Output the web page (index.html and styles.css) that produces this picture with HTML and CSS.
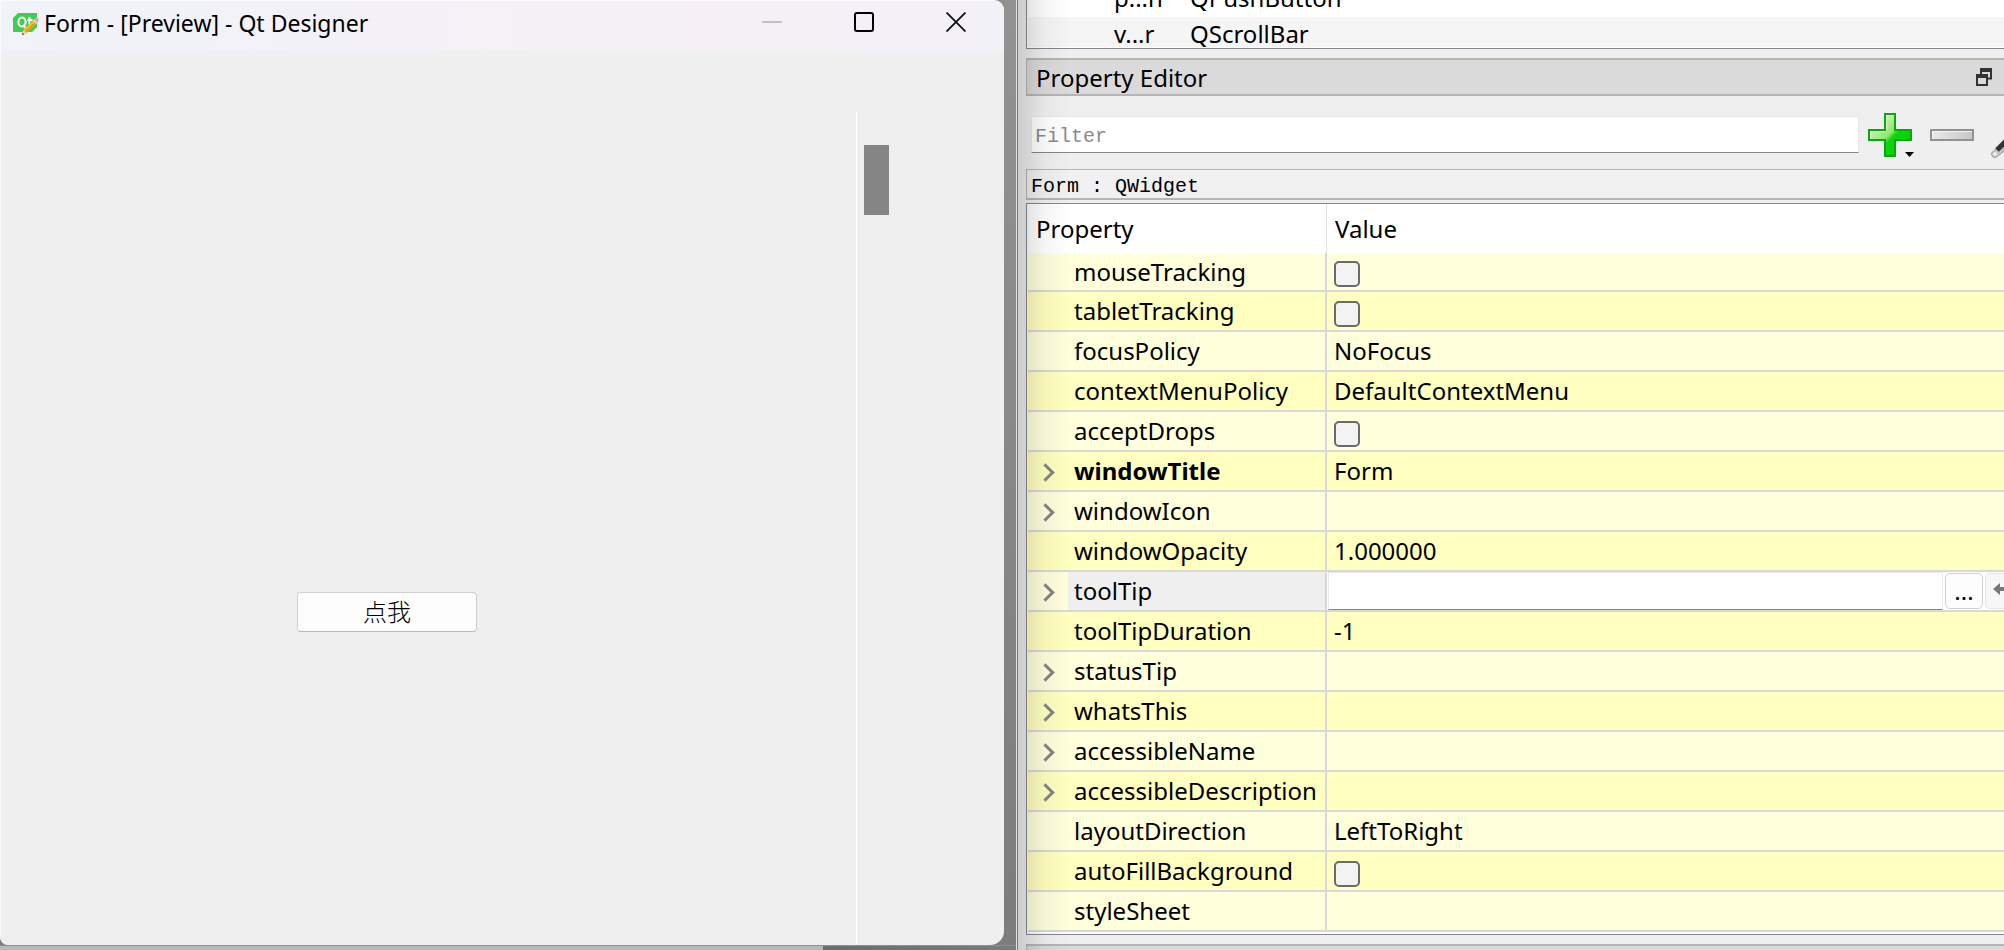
FILE: index.html
```html
<!DOCTYPE html>
<html lang="en">
<head>
<meta charset="utf-8">
<title>Form - [Preview] - Qt Designer</title>
<link rel="stylesheet" href="styles.css">
</head>
<body>
<div class="screen">
  <div class="backdrop">
    <section class="window">
      <header class="titlebar">
        <svg class="app-icon" width="28" height="24" viewBox="0 0 28 24" aria-hidden="true">
          <path d="M6 1h19v14l-5 5H1V6z" fill="#41cd52"/>
          <ellipse cx="10" cy="10" rx="3.6" ry="4.6" fill="none" stroke="#fff" stroke-width="2"/>
          <path d="M11 13l2.500 3M17.500 5v8q0 2 2.500 1.500M15.500 8h5" fill="none" stroke="#fff" stroke-width="2"/>
          <path d="M10 23l1.500-5L22 7.500l3.500 3L14.500 21z" fill="#f8c022" stroke="#c8963a" stroke-width=".5"/>
          <path d="M13.500 20L24.500 9.500" stroke="#e88b12" stroke-width="1.200"/>
          <path d="M10 23l1.500-5 3 3z" fill="#ecd9bd"/><path d="M10 23l.7-2.300 1.600 1.500z" fill="#444"/>
          <path d="M21.500 8L23.500 6q1.500-.8 2.700.3t.3 2.700L24.500 11z" fill="#e6a9a0"/>
          <path d="M20.500 9l1.500-1.500 3.300 3L23.800 12z" fill="#d5d5d5"/>
        </svg>
        <h1 class="window-title">Form - [Preview] - Qt Designer</h1>
        <div class="window-buttons">
          <button class="window-button" aria-label="Minimize"><svg width="20" height="20"><path d="M0 10h20" stroke="#c3c0c7" stroke-width="2"/></svg></button>
          <button class="window-button" aria-label="Maximize"><svg width="20" height="20"><rect x="1" y="1" width="18" height="18" rx="2" fill="none" stroke="#000" stroke-width="2"/></svg></button>
          <button class="window-button" aria-label="Close"><svg width="20" height="20"><path d="M.5.5l19 19M19.500.5l-19 19" stroke="#111" stroke-width="1.800"/></svg></button>
        </div>
      </header>
      <div class="form">
        <div class="form-canvas"><button class="push-button" lang="zh">点我</button></div>
        <div class="scrollbar"><div class="scrollbar-thumb"></div></div>
      </div>
    </section>
    <div class="taskstrip"></div>
  </div>

  <main class="dock">
    <div class="inspector">
      <div class="inspector-rows">
        <div class="inspector-row"><span class="object-name">p...n</span><span>QPushButton</span></div>
        <div class="inspector-row inspector-row-alt"><span class="object-name">v...r</span><span>QScrollBar</span></div>
      </div>
    </div>
    <header class="dock-title">
      <h2 class="dock-name">Property Editor</h2>
      <button class="float-button" aria-label="Float"><svg width="16" height="18"><path d="M5 6V1.500h10v9h-3" fill="none" stroke="#333" stroke-width="2"/><path d="M4 2h12" stroke="#333" stroke-width="4"/><rect x="1" y="8" width="10" height="9" fill="#dadada" stroke="#333" stroke-width="2"/><path d="M0 8h12" stroke="#333" stroke-width="4"/></svg></button>
    </header>
    <div class="toolbar">
      <input class="filter" type="text" placeholder="Filter" aria-label="Filter">
      <button class="tool-button" aria-label="Add property">
        <svg width="48" height="46" viewBox="0 0 48 46">
          <defs><linearGradient id="plus" x1="0" y1="0" x2="1" y2="1"><stop offset="0" stop-color="#f4fdea"/><stop offset=".48" stop-color="#8fe870"/><stop offset=".56" stop-color="#0cd60c"/><stop offset="1" stop-color="#00d000"/></linearGradient></defs>
          <path d="M17 1h10v16h16v10H27v16H17V27H1V17h16z" fill="url(#plus)" stroke="#06a80c" stroke-width="2"/>
          <path d="M18.500 17V2.500h7M2.500 26v-7.500H17" fill="none" stroke="#d8f8c8" stroke-width="1"/>
          <path d="M37 39h9l-4.500 5z" fill="#000"/>
        </svg>
      </button>
      <button class="tool-button" aria-label="Remove property">
        <svg width="44" height="46" viewBox="0 0 44 46">
          <defs><linearGradient id="minus"><stop offset="0" stop-color="#e9e9e9"/><stop offset=".6" stop-color="#d5d5d5"/><stop offset="1" stop-color="#c5c5c5"/></linearGradient></defs>
          <rect x="1" y="17" width="42" height="10" fill="url(#minus)" stroke="#929292" stroke-width="2"/>
          <path d="M2.500 26v-7.500H42" fill="none" stroke="#f4f4f4"/>
        </svg>
      </button>
      <button class="tool-button tool-button-cut" aria-label="Configure">
        <svg width="14" height="46" viewBox="0 0 14 46">
          <path d="M1.500 40L14 28v10l-6 5q-6 4-6.500-3z" fill="#c4c4c4" stroke="#999"/>
          <path d="M7 37L16 28" stroke="#333" stroke-width="5"/>
          <circle cx="5" cy="41" r="2" fill="#eee"/>
        </svg>
      </button>
    </div>
    <div class="object-label">Form : QWidget</div>
    <div class="property-frame">
      <table class="properties">
        <colgroup><col class="col-name"><col></colgroup>
        <thead><tr><th>Property</th><th>Value</th></tr></thead>
        <tbody>
          <tr><td><label class="name" for="mouse">mouseTracking</label></td><td><input class="check" type="checkbox" id="mouse"></td></tr>
          <tr><td><label class="name" for="tablet">tabletTracking</label></td><td><input class="check" type="checkbox" id="tablet"></td></tr>
          <tr><td><span class="name">focusPolicy</span></td><td>NoFocus</td></tr>
          <tr><td><span class="name">contextMenuPolicy</span></td><td>DefaultContextMenu</td></tr>
          <tr><td><label class="name" for="drops">acceptDrops</label></td><td><input class="check" type="checkbox" id="drops"></td></tr>
          <tr><td><span class="name expandable changed">windowTitle</span></td><td>Form</td></tr>
          <tr><td><span class="name expandable">windowIcon</span></td><td></td></tr>
          <tr><td><span class="name">windowOpacity</span></td><td>1.000000</td></tr>
          <tr><td><label class="name expandable selected" for="tooltip">toolTip</label></td>
            <td class="editing"><div class="editor"><input class="editor-input" type="text" id="tooltip"><button class="editor-button" aria-label="Edit text">...</button><button class="editor-button editor-reset" aria-label="Reset"><svg width="20" height="20" viewBox="0 0 20 20"><path d="M0 8l7-6v4h8v4H7v4z" fill="#777"/><path d="M11 13h3v3h-3z" fill="#777"/></svg></button></div></td></tr>
          <tr><td><span class="name">toolTipDuration</span></td><td>-1</td></tr>
          <tr><td><span class="name expandable">statusTip</span></td><td></td></tr>
          <tr><td><span class="name expandable">whatsThis</span></td><td></td></tr>
          <tr><td><span class="name expandable">accessibleName</span></td><td></td></tr>
          <tr><td><span class="name expandable">accessibleDescription</span></td><td></td></tr>
          <tr><td><span class="name">layoutDirection</span></td><td>LeftToRight</td></tr>
          <tr><td><label class="name" for="autofill">autoFillBackground</label></td><td><input class="check" type="checkbox" id="autofill"></td></tr>
          <tr><td><span class="name">styleSheet</span></td><td></td></tr>
        </tbody>
      </table>
    </div>
    <div class="next-dock"></div>
  </main>
</div>
</body>
</html>
```
FILE: styles.css
```css
* { box-sizing: border-box; }

body {
  margin: 0;
  overflow: hidden;
  color: #000;
  font: 24px/36px "Noto Sans", "Open Sans", sans-serif;
}

button { margin: 0; padding: 0; border: 0; background: none; color: inherit; font: inherit; }
svg { display: block; }

.screen {
  display: grid;
  grid-template-columns: 1016fr 988fr;
  height: 100vh;
  overflow: hidden;
  background: #efefef;
}

/* Preview window */
.backdrop {
  display: flex;
  flex-direction: column;
  min-width: 0;
  padding-right: 12px;
  background: linear-gradient(#929292, #7c7c7c);
}

.window {
  display: flex;
  flex: 1;
  flex-direction: column;
  overflow: hidden;
  border-top: 1px solid #fafafc;
  border-left: 1px solid #fafafc;
  border-radius: 0 10px 14px 8px;
  background: #efefef;
}

.titlebar {
  display: flex;
  align-items: center;
  height: 50px;
  padding: 0 16px 6px 11px;
  background: linear-gradient(90deg, #f0f3f9, #f6f0f6 70%, #f3f1f8);
}

.app-icon { margin-top: 2px; }
.window-title { flex: 1; margin: 0 0 0 4px; font-size: 23px; font-weight: 400; }
.window-buttons { display: flex; margin-top: -2px; }
.window-button { display: grid; place-items: center; width: 92px; height: 44px; }
.window-button:last-child { width: 64px; margin-left: 14px; }

.form { display: flex; flex: 1; padding-top: 60px; }

.form-canvas {
  display: grid;
  flex: 1;
  grid-template-rows: 481px 40px;
  grid-template-columns: 296fr 180px 379fr;
}

.push-button {
  grid-area: 2 / 2;
  padding-bottom: 2px;
  border: 1px solid #d0d0d0;
  border-bottom-color: #b8b8b8;
  border-radius: 4px;
  background: #fdfdfd;
  font-family: "Noto Sans CJK SC", sans-serif;
  font-weight: 300;
}

.scrollbar { width: 148px; padding: 34px 0 0 7px; border-left: 1px solid #fff; }
.scrollbar-thumb { width: 25px; height: 70px; background: #858585; }

.taskstrip {
  height: 5px;
  margin-right: -12px;
  border-top: 1px solid #8e8e8e;
  background: linear-gradient(90deg, #b9b9b9 81%, #6c6c6c 81%, #7c7c7c);
}

/* Designer docks */
.dock {
  position: relative;
  display: flex;
  flex-direction: column;
  min-width: 0;
  padding-left: 9px;
  border-left: 1px solid #e2e2ea;
  box-shadow: inset 1px 0 #777780;
}

/* Shadow cast by the preview window */
.dock::after {
  content: "";
  position: absolute;
  inset: 0 auto 0 1px;
  width: 52px;
  background: linear-gradient(90deg, rgba(0, 0, 0, .15), rgba(0, 0, 0, .04) 50%, transparent);
  pointer-events: none;
}

.inspector {
  height: 49px;
  overflow: hidden;
  padding-bottom: 1px;
  border: solid #828790;
  border-width: 0 0 1px 1px;
  background: #fff;
}

.inspector-rows { height: 47px; margin-left: 1px; overflow: hidden; }
.inspector-row { display: flex; height: 36px; padding-left: 86px; line-height: 34px; }
.inspector-row:first-child { margin-top: -19px; }
.inspector-row-alt { background: #f5f5f5; }
.object-name { width: 76px; }

.dock-title {
  display: flex;
  align-items: center;
  justify-content: space-between;
  height: 38px;
  margin-top: 9px;
  padding: 0 12px 0 9px;
  border: solid #b5b5b5;
  border-width: 2px 0 2px 1px;
  background: #dadada;
}

.dock-name { margin: 0; padding-top: 2px; font-size: 24px; font-weight: 400; }

.toolbar { display: flex; padding: 17px 0 10px 5px; }

.filter {
  flex: 1;
  min-width: 0;
  height: 37px;
  margin-top: 3px;
  padding: 4px 3px 0;
  border: 1px solid #e8e8e8;
  border-bottom-color: #868686;
  background: #fff;
  font: 20px/24px "Liberation Mono", monospace;
}

.filter::placeholder { color: #8a8a8a; }
.tool-button { margin-left: 9px; }
.tool-button + .tool-button { margin-left: 14px; }
.tool-button + .tool-button-cut { margin-left: 16px; }

.object-label {
  height: 31px;
  padding-left: 4px;
  border: solid #b5b5b5;
  border-width: 1px 0 2px 1px;
  background: #f1f1f1;
  font: 20px/34px "Liberation Mono", monospace;
}

.property-frame {
  margin-top: 3px;
  padding: 0 0 2px 1px;
  border: solid #828790;
  border-width: 1px 0 1px 1px;
  background: #fff;
}

.properties { width: 100%; table-layout: fixed; border-spacing: 0; }
.col-name { width: 299px; }

.properties th {
  height: 49px;
  padding: 0 8px;
  font-weight: 400;
  text-align: left;
}

.properties th:first-child { border-right: 1px solid #e2e2e2; }

.properties td {
  height: 40px;
  padding: 0 0 0 7px;
  border-bottom: 2px solid #d8d8d8;
  background: #ffffdc;
  line-height: 38px;
  white-space: nowrap;
}

.properties tr:first-child td { height: 39px; line-height: 37px; }
.properties tr:nth-child(even) td { background: #ffffbf; }
.properties td:first-child { padding: 0; border-right: 2px solid #d8d8d8; }

.name { display: block; margin-left: 40px; padding-left: 6px; }
.changed { font-weight: 700; }
.selected { background: #efefef; }

.expandable::before {
  content: "";
  float: left;
  width: 10px;
  height: 10px;
  margin: 14px 0 0 -35px;
  border: solid #858585;
  border-width: 3px 3px 0 0;
  transform: rotate(45deg);
}

.check {
  appearance: none;
  display: block;
  width: 26px;
  height: 26px;
  margin: 5px 0 0;
  border: 2px solid #6a6a6a;
  border-radius: 5px;
  background: #f3f3f3;
}

.properties td.editing { padding: 0 0 0 1px; background: #fff; }
.editor { display: flex; align-items: center; height: 38px; overflow: hidden; }

.editor-input {
  flex: 1;
  min-width: 0;
  height: 38px;
  border: 1px solid #e8e8e8;
  border-bottom-color: #868686;
  background: #fff;
  font: inherit;
}

.editor-button {
  width: 38px;
  height: 36px;
  margin-left: 2px;
  border: 1px solid #d0d0d0;
  border-radius: 5px;
  background: #fdfdfd;
  line-height: 34px;
}

.editor-reset {
  width: 19px;
  padding-left: 7px;
  overflow: hidden;
  border-color: #e5e5e5;
  border-right: 0;
  border-radius: 5px 0 0 5px;
  background: #f7f7f7;
}

.next-dock {
  flex: 1;
  margin-top: 9px;
  border: solid #b5b5b5;
  border-width: 2px 0 0 1px;
  background: #dadada;
}
```
